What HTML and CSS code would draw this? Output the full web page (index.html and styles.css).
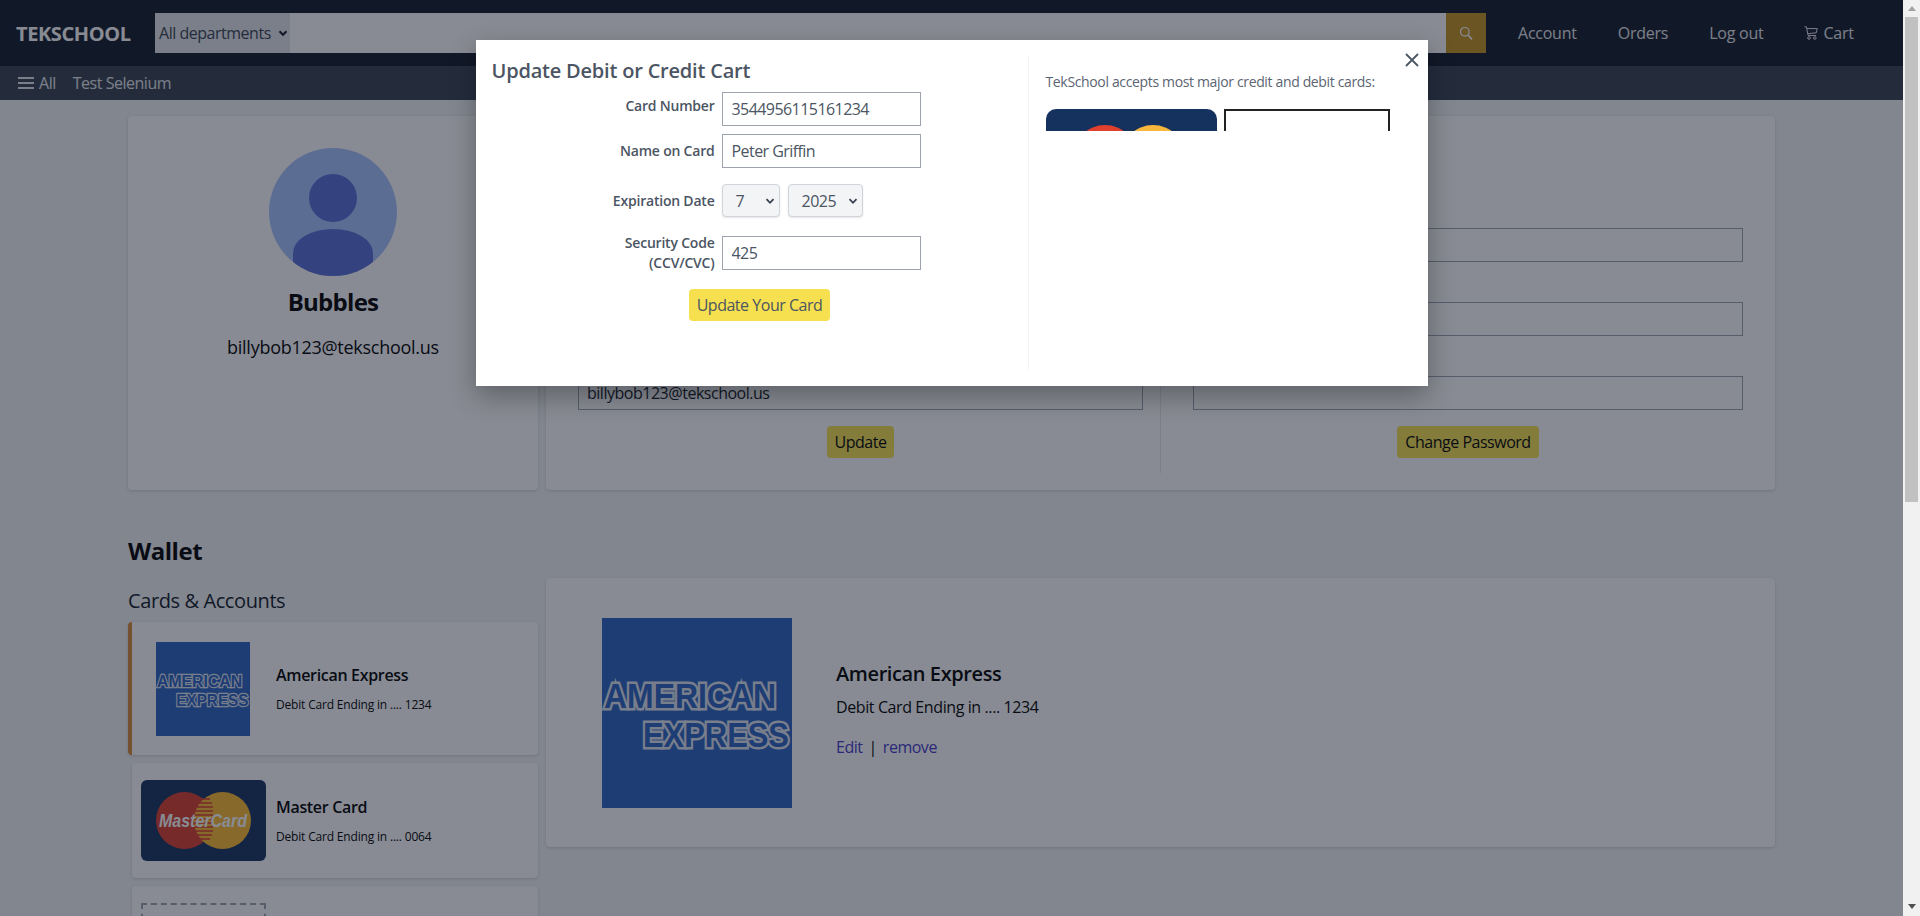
FILE: index.html
```html
<!DOCTYPE html>
<html lang="en">
<head>
    <meta charset="UTF-8">
    <meta name="viewport" content="width=device-width, initial-scale=1.0">
    <title>TekSchool - Account</title>
    <link rel="stylesheet" href="styles.css">
</head>
<body>
<div class="window">
    <div class="page">
        <header class="topbar">
            <a class="brand">TEKSCHOOL</a>
            <form class="search">
                <span class="dept">All departments
                    <svg width="10" height="10" viewBox="0 0 10 10"><path d="M1.5 3.2 5 6.800l3.500-3.600" fill="none" stroke="#111827" stroke-width="2"/></svg>
                </span>
                <span class="search-field"></span>
                <span class="search-btn">
                    <svg width="14" height="14" viewBox="0 0 14 14"><circle cx="5.800" cy="5.800" r="4.300" fill="none" stroke="#fff" stroke-width="1.200"/><path d="m9 9 4 4.400" stroke="#fff" stroke-width="1.600"/></svg>
                </span>
            </form>
            <nav class="topnav">
                <a>Account</a>
                <a>Orders</a>
                <a>Log out</a>
                <a class="cart">
                    <svg width="14" height="14" viewBox="0 0 14 14"><path d="M.5.8h1.900l1.700 8.700h8M2.800 2.600h10.500l-1 4.200-8.500.9" fill="none" stroke="#e5e7eb" stroke-width="1"/><circle cx="5" cy="12" r="1.300" fill="none" stroke="#e5e7eb"/><circle cx="10.800" cy="12" r="1.300" fill="none" stroke="#e5e7eb"/></svg>
                    Cart
                </a>
            </nav>
        </header>
        <div class="subbar">
            <a class="all">
                <svg width="16" height="14" viewBox="0 0 16 14"><path d="M0 2h16M0 7h16M0 12h16" stroke="#e5e7eb" stroke-width="2"/></svg>
                All
            </a>
            <a>Test Selenium</a>
        </div>

        <main class="content">
            <section class="account-grid">
                <div class="card profile">
                    <div class="avatar">
                        <span class="avatar-head"></span>
                        <span class="avatar-body"></span>
                    </div>
                    <h2 class="profile-name">Bubbles</h2>
                    <p class="profile-email">billybob123@tekschool.us</p>
                </div>
                <div class="card settings">
                    <div class="settings-col settings-left">
                        <label>Name</label>
                        <input class="field" value="Bubbles">
                        <label>Phone Number</label>
                        <input class="field" value="">
                        <label>Email</label>
                        <input class="field" value="billybob123@tekschool.us">
                        <button class="btn">Update</button>
                    </div>
                    <div class="settings-col settings-right">
                        <label>Previous Password</label>
                        <input class="field">
                        <label>New Password</label>
                        <input class="field">
                        <label>Confirm Password</label>
                        <input class="field">
                        <button class="btn">Change Password</button>
                    </div>
                </div>
            </section>

            <h2 class="wallet-title">Wallet</h2>
            <section class="wallet-grid">
                <div class="wallet-list">
                    <h3 class="wallet-sub">Cards &amp; Accounts</h3>
                    <div class="pay-card pay-active">
                        <svg class="amex amex-small" viewBox="0 0 190 190"><rect width="190" height="190"/><text x="2" y="90" textLength="172" lengthAdjust="spacingAndGlyphs">AMERICAN</text><text x="41" y="129" textLength="146" lengthAdjust="spacingAndGlyphs">EXPRESS</text></svg>
                        <div class="pay-text">
                            <h4>American Express</h4>
                            <p>Debit Card Ending in .... 1234</p>
                        </div>
                    </div>
                    <div class="pay-card">
                        <svg class="mc" viewBox="0 0 125 81"><rect width="125" height="81" rx="6" fill="#15325f"/><circle cx="43.500" cy="40.500" r="28.500" fill="#dd3c2d"/><circle cx="81.500" cy="40.500" r="28.500" fill="#fdbb30"/><g stroke="#dd3c2d" stroke-width="1.500"><path d="M56 19h13M54 23h17M53 27h19M53 31h19M53 35h19M53 39h19M53 43h19M53 47h19M53 51h19M54 55h17M56 59h13"/></g><text x="18" y="47" class="mc-text" textLength="88" lengthAdjust="spacingAndGlyphs">MasterCard</text></svg>
                        <div class="pay-text">
                            <h4>Master Card</h4>
                            <p>Debit Card Ending in .... 0064</p>
                        </div>
                    </div>
                    <div class="pay-card pay-add">
                        <span class="add-box"></span>
                    </div>
                </div>
                <div class="card detail">
                    <svg class="amex amex-large" viewBox="0 0 190 190"><rect width="190" height="190"/><text x="2" y="90" textLength="172" lengthAdjust="spacingAndGlyphs">AMERICAN</text><text x="41" y="129" textLength="146" lengthAdjust="spacingAndGlyphs">EXPRESS</text></svg>
                    <div class="detail-text">
                        <h4>American Express</h4>
                        <p>Debit Card Ending in .... 1234</p>
                        <div class="detail-links"><a>Edit</a><span>|</span><a>remove</a></div>
                    </div>
                </div>
            </section>
        </main>

        <div class="overlay">
            <div class="modal">
                <button class="modal-close">
                    <svg width="14" height="14" viewBox="0 0 14 14"><path d="M1 1l12 12M13 1 1 13" stroke="#4b5563" stroke-width="1.800" fill="none"/></svg>
                </button>
                <div class="modal-form">
                    <h2 class="modal-title">Update Debit or Credit Cart</h2>
                    <div class="form-row form-row-first">
                        <label class="label-raised">Card Number</label>
                        <input class="modal-input" value="3544956115161234">
                    </div>
                    <div class="form-row">
                        <label>Name on Card</label>
                        <input class="modal-input" value="Peter Griffin">
                    </div>
                    <div class="form-row form-row-date">
                        <label>Expiration Date</label>
                        <div class="date-selects">
                            <span class="date-select date-month">7
                                <svg width="10" height="10" viewBox="0 0 10 10"><path d="M1.500 3.200 5 6.800l3.500-3.600" fill="none" stroke="#374151" stroke-width="1.800"/></svg>
                            </span>
                            <span class="date-select date-year">2025
                                <svg width="10" height="10" viewBox="0 0 10 10"><path d="M1.500 3.200 5 6.800l3.500-3.600" fill="none" stroke="#374151" stroke-width="1.800"/></svg>
                            </span>
                        </div>
                    </div>
                    <div class="form-row form-row-code">
                        <label class="label-double">Security Code<br>(CCV/CVC)</label>
                        <input class="modal-input" value="425">
                    </div>
                    <button class="btn modal-btn">Update Your Card</button>
                </div>
                <div class="modal-side">
                    <p>TekSchool accepts most major credit and debit cards:</p>
                    <div class="accepted">
                        <svg class="accepted-mc" viewBox="0 0 171 22"><rect width="171" height="40" rx="10" fill="#15325f"/><circle cx="59" cy="48" r="32" fill="#e0402c"/><circle cx="107" cy="48" r="32" fill="#f6b73c"/></svg>
                        <span class="accepted-blank"></span>
                    </div>
                </div>
            </div>
        </div>
    </div>
    <div class="scrollbar">
        <span class="scroll-up"></span>
        <span class="scroll-thumb"></span>
        <span class="scroll-down"></span>
    </div>
</div>
</body>
</html>
```

FILE: styles.css
```css
* { box-sizing: border-box; }
html, body { margin: 0; height: 100%; overflow: hidden; }
body { font-family: "Open Sans", "Noto Sans", sans-serif; font-size: 16px; letter-spacing: -0.03em; color: #000; background: #f3f4f6; }
h2, h3, h4, p { margin: 0; }

.window { display: flex; width: 1920px; height: 916px; }
.page { position: relative; width: 1903px; height: 916px; overflow: hidden; background: #f3f4f6; }

/* scrollbar of the window */
.scrollbar { width: 17px; background: #f1f1f1; display: flex; flex-direction: column; align-items: center; }
.scroll-up { width: 0; height: 0; margin: 6px 0 6px; border-left: 4px solid transparent; border-right: 4px solid transparent; border-bottom: 5px solid #a3a3a3; }
.scroll-thumb { width: 13px; height: 485px; background: #c1c1c1; }
.scroll-down { width: 0; height: 0; margin: auto 0 7px; border-left: 4px solid transparent; border-right: 4px solid transparent; border-top: 5px solid #505050; }

/* top bars */
.topbar { height: 66px; background: #111827; display: flex; align-items: center; padding-left: 16px; color: #e5e7eb; }
.brand { width: 139px; font-size: 20px; font-weight: 700; letter-spacing: -0.02em; color: #fff; }
.search { display: flex; height: 40px; width: 1331px; }
.dept { width: 135px; background: #e5e7eb; color: #374151; display: flex; align-items: center; gap: 7px; padding-left: 4px; white-space: nowrap; }
.search-field { flex: 1; background: #fff; }
.search-btn { width: 40px; background: #c5921d; display: flex; align-items: center; justify-content: center; }
.topnav { display: flex; margin-left: 32px; gap: 41px; letter-spacing: -0.015em; }
.cart { display: flex; align-items: center; gap: 5px; }
.subbar { height: 34px; background: #374151; display: flex; align-items: center; padding-left: 18px; gap: 17px; color: #e5e7eb; }
.all { display: flex; align-items: center; gap: 5px; }

/* content */
.content { padding: 16px 0 0 128px; }
.card { background: #fff; border-radius: 4px; box-shadow: 0 1px 3px rgba(0, 0, 0, .15); }
.account-grid { display: grid; grid-template-columns: 410px 1229px; gap: 8px; height: 374px; }

.profile { display: flex; flex-direction: column; align-items: center; padding-top: 32px; }
.avatar { position: relative; width: 128px; height: 128px; border-radius: 50%; background: #a7c2ff; overflow: hidden; }
.avatar-head { position: absolute; left: 40px; top: 26px; width: 48px; height: 48px; border-radius: 50%; background: #576ed7; }
.avatar-body { position: absolute; left: 24px; top: 81px; width: 80px; height: 60px; border-radius: 40px 40px 0 0 / 24px 24px 0 0; background: #576ed7; }
.profile-name { margin-top: 8px; font-size: 24px; font-weight: 700; line-height: 36px; letter-spacing: -0.03em; }
.profile-email { margin-top: 13px; font-size: 18px; line-height: 28px; letter-spacing: -0.015em; }

.settings { display: flex; padding: 16px 32px 17px; }
.settings-col { display: flex; flex-direction: column; }
.settings-left { width: 583px; padding-right: 17px; border-right: 1px solid #e5e7eb; }
.settings-right { width: 582px; padding-left: 32px; }
.settings-col label { margin-top: 20px; font-size: 14px; font-weight: 600; line-height: 20px; }
.settings-col label:first-child { margin-top: 76px; }
.field { height: 34px; width: 100%; border: 1px solid #9ca3af; padding: 0 8px; font: inherit; letter-spacing: inherit; color: #111827; background: #fff; }
.btn { align-self: center; height: 32px; margin-top: 16px; padding: 0 8px; border: 0; border-radius: 4px; background: #f7e04f; color: #000; font: inherit; letter-spacing: inherit; }

/* wallet */
.wallet-title { margin-top: 45px; font-size: 24px; font-weight: 700; line-height: 32px; letter-spacing: -0.02em; }
.wallet-grid { display: grid; grid-template-columns: 410px 1229px; gap: 8px; }
.wallet-sub { margin-top: 20px; font-size: 20px; font-weight: 400; line-height: 28px; letter-spacing: -0.02em; color: #111827; }
.wallet-list { display: flex; flex-direction: column; }
.pay-card { display: flex; align-items: center; margin: 8px 0 0 4px; padding-left: 9px; height: 115px; background: #fff; border-radius: 4px; box-shadow: 0 1px 3px rgba(0, 0, 0, .15); flex: none; }
.pay-active { margin: 7px 0 0; height: 133px; padding-left: 24px; border-left: 4px solid #d98b3c; }
.pay-text { margin-left: 10px; }
.pay-text h4 { font-size: 16px; font-weight: 600; line-height: 24px; letter-spacing: -0.02em; }
.pay-text p { margin-top: 8px; font-size: 12px; line-height: 20px; letter-spacing: -0.015em; }
.pay-active .pay-text { margin-left: 26px; }
.pay-add { align-items: flex-start; height: 60px; padding-top: 17px; }
.add-box { display: block; width: 125px; height: 60px; border: 2px dashed #9ca3af; }

.amex { display: block; flex: none; }
.amex rect { fill: #2b62c0; }
.amex text { font-family: "Liberation Sans", Arial, sans-serif; font-size: 35px; font-weight: 700; letter-spacing: 0; fill: #2b62c0; stroke: #dfe5f0; stroke-width: 5px; paint-order: stroke; }
.amex-small { width: 94px; height: 94px; }
.amex-large { width: 190px; height: 190px; margin-left: 56px; }
.mc { display: block; flex: none; width: 125px; height: 81px; }
.mc-text { font-family: "Liberation Sans", Arial, sans-serif; font-size: 19px; font-weight: 700; font-style: italic; letter-spacing: 0; fill: #fff; }

.detail { display: flex; align-items: center; height: 269px; margin-top: 11px; }
.detail-text { margin-left: 44px; padding-bottom: 7px; }
.detail-text h4 { font-size: 20px; font-weight: 600; line-height: 28px; letter-spacing: -0.02em; }
.detail-text p { margin-top: 7px; line-height: 24px; letter-spacing: -0.025em; }
.detail-links { display: flex; margin-top: 16px; line-height: 24px; }
.detail-links a { color: #4338ca; }
.detail-links span { margin: 0 6px; }

/* update card popup */
.overlay { position: absolute; inset: 0; background: rgba(17, 24, 39, .5); display: flex; justify-content: center; align-items: flex-start; padding-top: 40px; }
.modal { position: relative; display: flex; width: 952px; height: 346px; padding: 16px; background: #fff; box-shadow: 0 10px 25px rgba(0, 0, 0, .3); color: #4b5563; }
.modal-close { position: absolute; top: 13px; right: 9px; width: 14px; height: 14px; padding: 0; border: 0; background: none; display: block; }
.modal-close svg { display: block; }
.modal-form { width: 536px; display: flex; flex-direction: column; }
.modal-title { font-size: 20px; font-weight: 600; line-height: 28px; margin-top: 1px; letter-spacing: -0.01em; }
.form-row { display: grid; grid-template-columns: 223px 199px; column-gap: 7px; align-items: center; margin-top: 8px; }
.form-row label { font-size: 14px; font-weight: 600; line-height: 20px; text-align: right; letter-spacing: -0.015em; }
.form-row-first { margin-top: 7px; }
.label-raised { margin-top: -6px; }
.form-row-date { margin-top: 16px; }
.form-row-code { margin-top: 19px; }
.label-double { margin: -3px 0; }
.modal-input { height: 34px; width: 100%; border: 1px solid #9ca3af; padding: 0 9px; font: inherit; letter-spacing: -0.035em; color: #4b5563; background: #fff; }
.date-selects { display: flex; gap: 8px; }
.date-select { display: flex; align-items: center; justify-content: space-between; height: 33px; padding: 0 4px 0 13px; background: #f3f4f6; border: 1px solid #d1d5db; border-radius: 4px; box-shadow: 0 1px 2px rgba(0, 0, 0, .1); }
.date-month { width: 58px; }
.date-year { width: 75px; }
.modal-btn { margin-top: 19px; color: #4b5563; }
.modal-side { width: 384px; height: 314px; border-left: 1px solid #f3f4f6; padding: 16px 0 0 17px; }
.modal-side p { font-size: 14px; line-height: 20px; letter-spacing: -0.025em; color: #5b6472; }
.accepted { display: flex; gap: 7px; margin-top: 17px; height: 22px; overflow: hidden; }
.accepted-mc { width: 171px; height: 22px; flex: none; display: block; }
.accepted-blank { width: 166px; height: 60px; border: 2px solid #222; border-bottom: 0; display: block; }
```
